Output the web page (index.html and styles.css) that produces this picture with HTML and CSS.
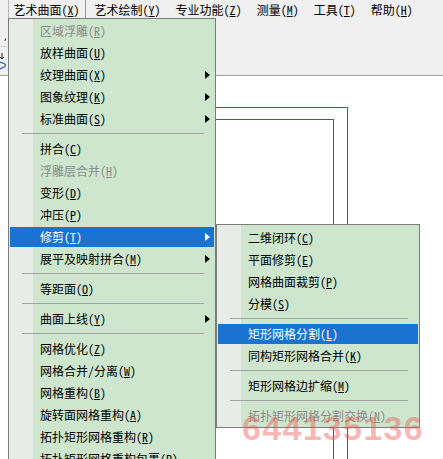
FILE: index.html
```html
<!DOCTYPE html>
<html lang="zh-CN">
<head>
<meta charset="utf-8">
<link rel="stylesheet" href="styles.css">
</head>
<body>
<div class="app">
  <div class="menubar">
    <div class="mb-item active">艺术曲面(<u>X</u>)</div>
    <div class="mb-item">艺术绘制(<u>Y</u>)</div>
    <div class="mb-item">专业功能(<u>Z</u>)</div>
    <div class="mb-item">测量(<u>M</u>)</div>
    <div class="mb-item">工具(<u>T</u>)</div>
    <div class="mb-item">帮助(<u>H</u>)</div>
  </div>
  <div class="toolbar">
    <svg class="tb-frag" width="8" height="57" viewBox="0 0 8 57">
      <line x1="0" y1="28.5" x2="7" y2="28.5" stroke="#d4d4d4" stroke-width="1"/>
      <path d="M5.5 20.5 L5.5 22 L4.5 23" stroke="#333" stroke-width="1" fill="none"/>
      <path d="M2 35 L2 41 M0 39 L2 41 L4 39" stroke="#222" stroke-width="1" fill="none"/>
      <path d="M0 44 L4 45.5 Q7 47 4 49 L0 51" stroke="#2b56c9" stroke-width="1.2" fill="none"/>
    </svg>
  </div>
  <div class="canvas">
    <div class="rect outer"></div>
    <div class="rect inner"></div>
  </div>

  <div class="menu main">
    <div class="item disabled">区域浮雕(<u>R</u>)</div>
    <div class="item">放样曲面(<u>U</u>)</div>
    <div class="item has-sub">纹理曲面(<u>X</u>)</div>
    <div class="item has-sub">图象纹理(<u>K</u>)</div>
    <div class="item has-sub">标准曲面(<u>S</u>)</div>
    <div class="sep"></div>
    <div class="item">拼合(<u>C</u>)</div>
    <div class="item disabled">浮雕层合并(<u>H</u>)</div>
    <div class="item">变形(<u>D</u>)</div>
    <div class="item">冲压(<u>P</u>)</div>
    <div class="item has-sub hl">修剪(<u>T</u>)</div>
    <div class="item has-sub">展平及映射拼合(<u>M</u>)</div>
    <div class="sep"></div>
    <div class="item">等距面(<u>O</u>)</div>
    <div class="sep"></div>
    <div class="item has-sub">曲面上线(<u>Y</u>)</div>
    <div class="sep"></div>
    <div class="item">网格优化(<u>Z</u>)</div>
    <div class="item">网格合并/分离(<u>W</u>)</div>
    <div class="item">网格重构(<u>B</u>)</div>
    <div class="item">旋转面网格重构(<u>A</u>)</div>
    <div class="item">拓扑矩形网格重构(<u>R</u>)</div>
    <div class="item">拓扑矩形网格重构包裹(<u>P</u>)</div>
  </div>

  <div class="menu sub">
    <div class="item">二维闭环(<u>C</u>)</div>
    <div class="item">平面修剪(<u>E</u>)</div>
    <div class="item">网格曲面裁剪(<u>P</u>)</div>
    <div class="item">分模(<u>S</u>)</div>
    <div class="sep"></div>
    <div class="item hl">矩形网格分割(<u>L</u>)</div>
    <div class="item">同构矩形网格合并(<u>K</u>)</div>
    <div class="sep"></div>
    <div class="item">矩形网格边扩缩(<u>M</u>)</div>
    <div class="sep"></div>
    <div class="item disabled">拓扑矩形网格分割交换(<u>N</u>)</div>
  </div>

  <div class="watermark">644135136</div>
</div>
</body>
</html>
```

FILE: styles.css
```css
html, body {
  margin: 0;
  padding: 0;
  background: #ffffff;
  overflow: hidden;
}

body {
  font-family: "Noto Sans Mono CJK SC", "Noto Sans CJK SC", sans-serif;
  font-size: 12px;
  color: #000;
}

.app {
  position: relative;
  width: 443px;
  height: 459px;
  overflow: hidden;
}

.menubar {
  display: flex;
  height: 18px;
  line-height: 19px;
  padding-left: 6px;
  background: #f0f0f0;
}

.mb-item {
  position: relative;
  padding: 0 7.5px;
  white-space: nowrap;
}

.mb-item.active::before {
  content: "";
  position: absolute;
  top: 0;
  bottom: 0;
  left: 2px;
  right: 1px;
  border-left: 1px solid #b9b9b9;
  border-right: 1px solid #9a9a9a;
}

.toolbar {
  height: 57px;
  background: #f0f0f0;
  border-bottom: 1px solid #a0a0a0;
}

.tb-frag {
  display: block;
}

.canvas {
  position: relative;
  height: 383px;
  background: #ffffff;
}

.rect {
  position: absolute;
  border: 1px solid #d4203c;
}

.rect.outer {
  left: 100px;
  top: 31px;
  width: 246px;
  height: 400px;
}

.rect.inner {
  left: 110px;
  top: 43px;
  width: 222px;
  height: 400px;
}

.menu {
  position: absolute;
  display: flex;
  flex-direction: column;
  box-sizing: border-box;
  border: 1px solid #7b7b7b;
  background: linear-gradient(to right, #e7ece7 0, #e7ece7 24px, #cde6cd 24px);
}

.menu.main {
  left: 8px;
  top: 18px;
  width: 208px;
  height: 480px;
  padding-top: 1px;
}

.menu.sub {
  left: 216px;
  top: 224px;
  width: 204px;
  padding-top: 2px;
}

.item {
  position: relative;
  flex: none;
  height: 20px;
  line-height: 20px;
  margin: 1px;
  padding-left: 30px;
  white-space: nowrap;
}

.item.disabled {
  color: #8c8c8c;
}

.item.hl {
  background: #1a73d1;
  color: #ffffff;
}

.item.has-sub::after {
  content: "";
  position: absolute;
  right: 4px;
  top: 6px;
  border-left: 5px solid #000;
  border-top: 4px solid transparent;
  border-bottom: 4px solid transparent;
}

.item.hl.has-sub::after {
  border-left-color: #ffffff;
}

.sep {
  flex: none;
  height: 1px;
  margin: 3px 11px 4px 13px;
  background: #a3a3a3;
}

.watermark {
  position: absolute;
  left: 242px;
  top: 411px;
  font-family: "Liberation Sans", Arial, sans-serif;
  font-weight: bold;
  font-size: 34px;
  line-height: 34px;
  letter-spacing: 1.3px;
  color: rgba(240, 80, 80, 0.42);
  pointer-events: none;
}
```
